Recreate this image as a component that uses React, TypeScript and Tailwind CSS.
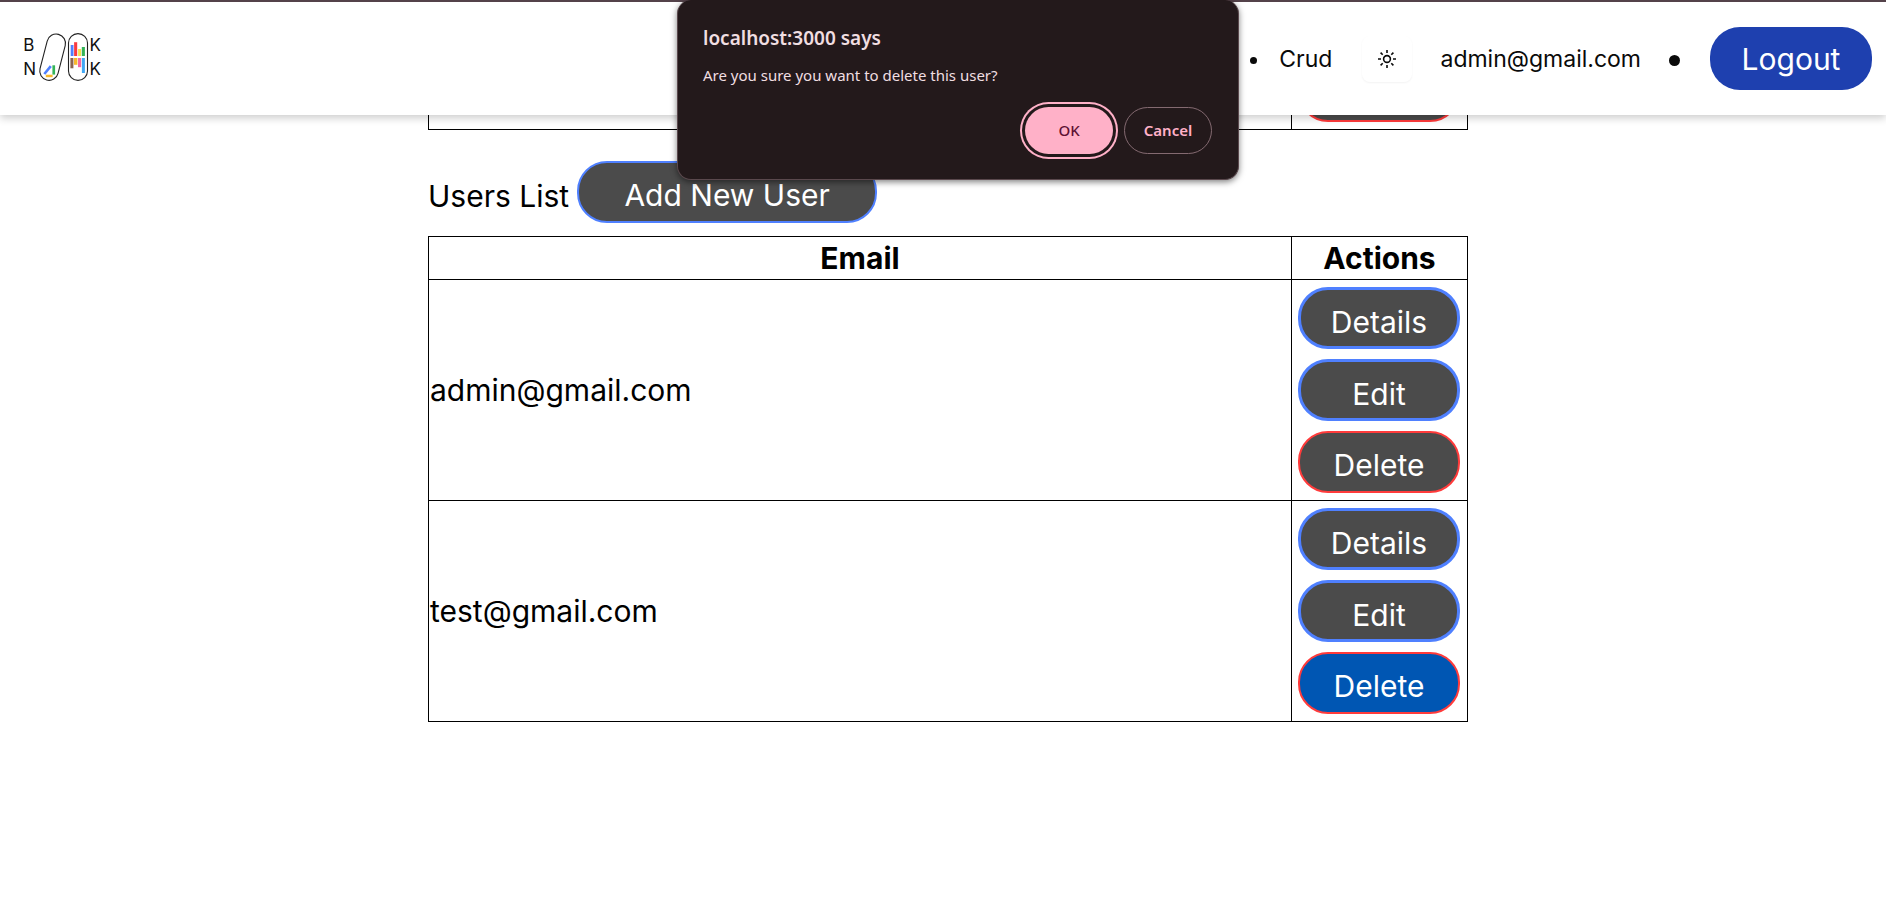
import type { ReactNode } from "react";

const tones = {
  blue: "border-3 border-[#4f80ff] bg-[#4b4b4b] pt-2",
  red: "border-2 border-[#ff3b3b] bg-[#4b4b4b] pt-1.5",
  redActive: "border-2 border-[#ff3b3b] bg-[#0056b3] pt-1.5",
};

function ActionButton({ tone, children }: { tone: keyof typeof tones; children: ReactNode }) {
  return (
    <button
      type="button"
      className={`flex h-[62px] w-full items-center justify-center rounded-[30px] text-[30px] leading-10 text-white ${tones[tone]}`}
    >
      {children}
    </button>
  );
}

function Logo() {
  return (
    <svg width="80" height="50" viewBox="22 31 80 50" role="img" aria-label="Book Nook">
      <g fontFamily="Inter, sans-serif" fontSize="17" fill="#111">
        <text x="23.2" y="49.5">B</text>
        <text x="23.2" y="73.5">N</text>
        <text x="89.5" y="49.5">K</text>
        <text x="89.5" y="73.5">K</text>
      </g>
      <g fill="none" stroke="#222" strokeWidth="1.1">
        <rect x="43.3" y="32.6" width="18.6" height="47.2" rx="9.3" transform="rotate(14.5 52.6 56.3)" />
        <rect x="68.5" y="32.6" width="19" height="46.8" rx="9.5" />
      </g>
      <path d="M44.3 73 50.8 65.2" stroke="#4f80ff" strokeWidth="2.6" />
      <path d="M52.4 64.3h2.7v9.3h-2.7z" fill="#34b458" />
      <path d="M45.8 73.7h6.8v2.5h-6.8z" fill="#f9b82c" />
      <path d="M70.7 44h2.8v11h-2.8z" fill="#4f80ff" />
      <path d="M74.1 41.2h3.1V55h-3.1z" fill="#f93a41" />
      <path d="M78.1 48h3v7h-3z" fill="#f7e04e" />
      <path d="M81.8 46h3.1v9h-3.1z" fill="#34b458" />
      <path d="M70.4 57h3v10.3h-3z" fill="#8b6450" />
      <path d="M74 57h3.4v6.8H74z" fill="#f9b82c" />
      <path d="M78 57h3.2v9.2H78z" fill="#f768a1" />
      <path d="M81.9 57h3v15h-3z" fill="#41a8f5" />
    </svg>
  );
}

function SunIcon() {
  return (
    <svg width="20" height="20" viewBox="0 0 20 20" fill="none" stroke="#0a0a0a" strokeWidth="1.6" aria-hidden="true">
      <circle cx="10" cy="10" r="3.4" />
      <path d="M10 1v3M10 16v3M1 10h3M16 10h3M3.6 3.6l2.1 2.1M14.3 14.3l2.1 2.1M3.6 16.4l2.1-2.1M14.3 5.7l2.1-2.1" />
    </svg>
  );
}

function Header() {
  return (
    <header className="relative z-10 flex h-[115px] items-center justify-between border-t-2 border-[#54424a] bg-white pr-[14px] pl-[22px] shadow-[0_3px_8px_rgba(0,0,0,0.2)]">
      <a href="#home" className="mb-1">
        <Logo />
      </a>
      <nav className="flex items-center text-[23px] leading-9">
        <span className="mt-1 mr-[22px] size-[7px] rounded-full bg-[#0a0a0a]" />
        <a href="#crud">Crud</a>
        <button
          type="button"
          aria-label="Toggle theme"
          className="mr-7 ml-[30px] flex h-[46px] w-[50px] items-center justify-center rounded-lg bg-white shadow-[0_1px_2px_rgba(0,0,0,0.05)]"
        >
          <SunIcon />
        </button>
        <span>admin@gmail.com</span>
        <span className="mr-[30px] ml-7 mt-1 size-[11px] rounded-full bg-[#0a0a0a]" />
        <button type="button" className="h-[63px] w-[162px] rounded-[30px] bg-[#1e40af] text-[30px] text-white">
          Logout
        </button>
      </nav>
    </header>
  );
}

function ConfirmDialog() {
  return (
    <div
      role="alertdialog"
      aria-labelledby="confirm-title"
      aria-describedby="confirm-text"
      className="absolute top-0 left-1/2 z-20 ml-[15px] w-[562px] -translate-x-1/2 rounded-[14px] border border-t-0 border-[#5a484d] bg-[#23191b] pt-6 pr-[26px] pb-[25px] pl-[25px] font-['Noto_Sans',sans-serif] text-[#f0dee1] shadow-[0_2px_6px_rgba(0,0,0,0.5)]"
    >
      <h2 id="confirm-title" className="text-[19px] leading-7 font-semibold">
        localhost:3000 says
      </h2>
      <p id="confirm-text" className="mt-[11px] text-[15px] leading-6">
        Are you sure you want to delete this user?
      </p>
      <div className="mt-5 flex justify-end gap-[11px] text-[15px]">
        <button
          type="button"
          className="h-[47px] w-[88px] rounded-full bg-[#ffb1c8] font-medium text-[#5e1133] ring-2 ring-[#ffb1c8] ring-offset-3 ring-offset-[#23191b]"
        >
          OK
        </button>
        <button
          type="button"
          className="h-[47px] w-[88px] rounded-full border border-[#846a71] font-semibold text-[#ffb1c8]"
        >
          Cancel
        </button>
      </div>
    </div>
  );
}

const users = [
  { email: "admin@gmail.com", active: false },
  { email: "test@gmail.com", active: true },
];

export default function App() {
  return (
    <div className="relative min-h-screen overflow-hidden bg-white font-['Inter',sans-serif] text-[#0a0a0a]">
      <Header />
      <ConfirmDialog />
      <main className="mx-auto -mt-[61px] max-w-[1050px] pl-[10px] text-[30px] leading-10 text-black">
        <table className="w-full table-fixed border-collapse border border-black">
          <tbody>
            <tr>
              <td className="border border-black" />
              <td className="w-[176px] border border-black pt-[5px] pr-[7px] pb-[7px] pl-1.5">
                <ActionButton tone="red">Delete</ActionButton>
              </td>
            </tr>
          </tbody>
        </table>
        <div className="mt-[31px] mb-[13px] flex items-center gap-2">
          <h1 className="pt-[7px]">Users List</h1>
          <button
            type="button"
            className="h-[62px] w-[300px] rounded-[30px] border-2 border-[#4f80ff] bg-[#4b4b4b] pt-1.5 text-white"
          >
            Add New User
          </button>
        </div>
        <table className="w-full table-fixed border-collapse border border-black">
          <thead>
            <tr>
              <th className="border border-black p-px font-bold">Email</th>
              <th className="w-[176px] border border-black p-px font-bold">Actions</th>
            </tr>
          </thead>
          <tbody>
            {users.map((user) => (
              <tr key={user.email}>
                <td className="border border-black p-px">{user.email}</td>
                <td className="border border-black py-[7px] pr-[7px] pl-1.5">
                  <div className="flex flex-col gap-2.5">
                    <ActionButton tone="blue">Details</ActionButton>
                    <ActionButton tone="blue">Edit</ActionButton>
                    <ActionButton tone={user.active ? "redActive" : "red"}>Delete</ActionButton>
                  </div>
                </td>
              </tr>
            ))}
          </tbody>
        </table>
      </main>
    </div>
  );
}
